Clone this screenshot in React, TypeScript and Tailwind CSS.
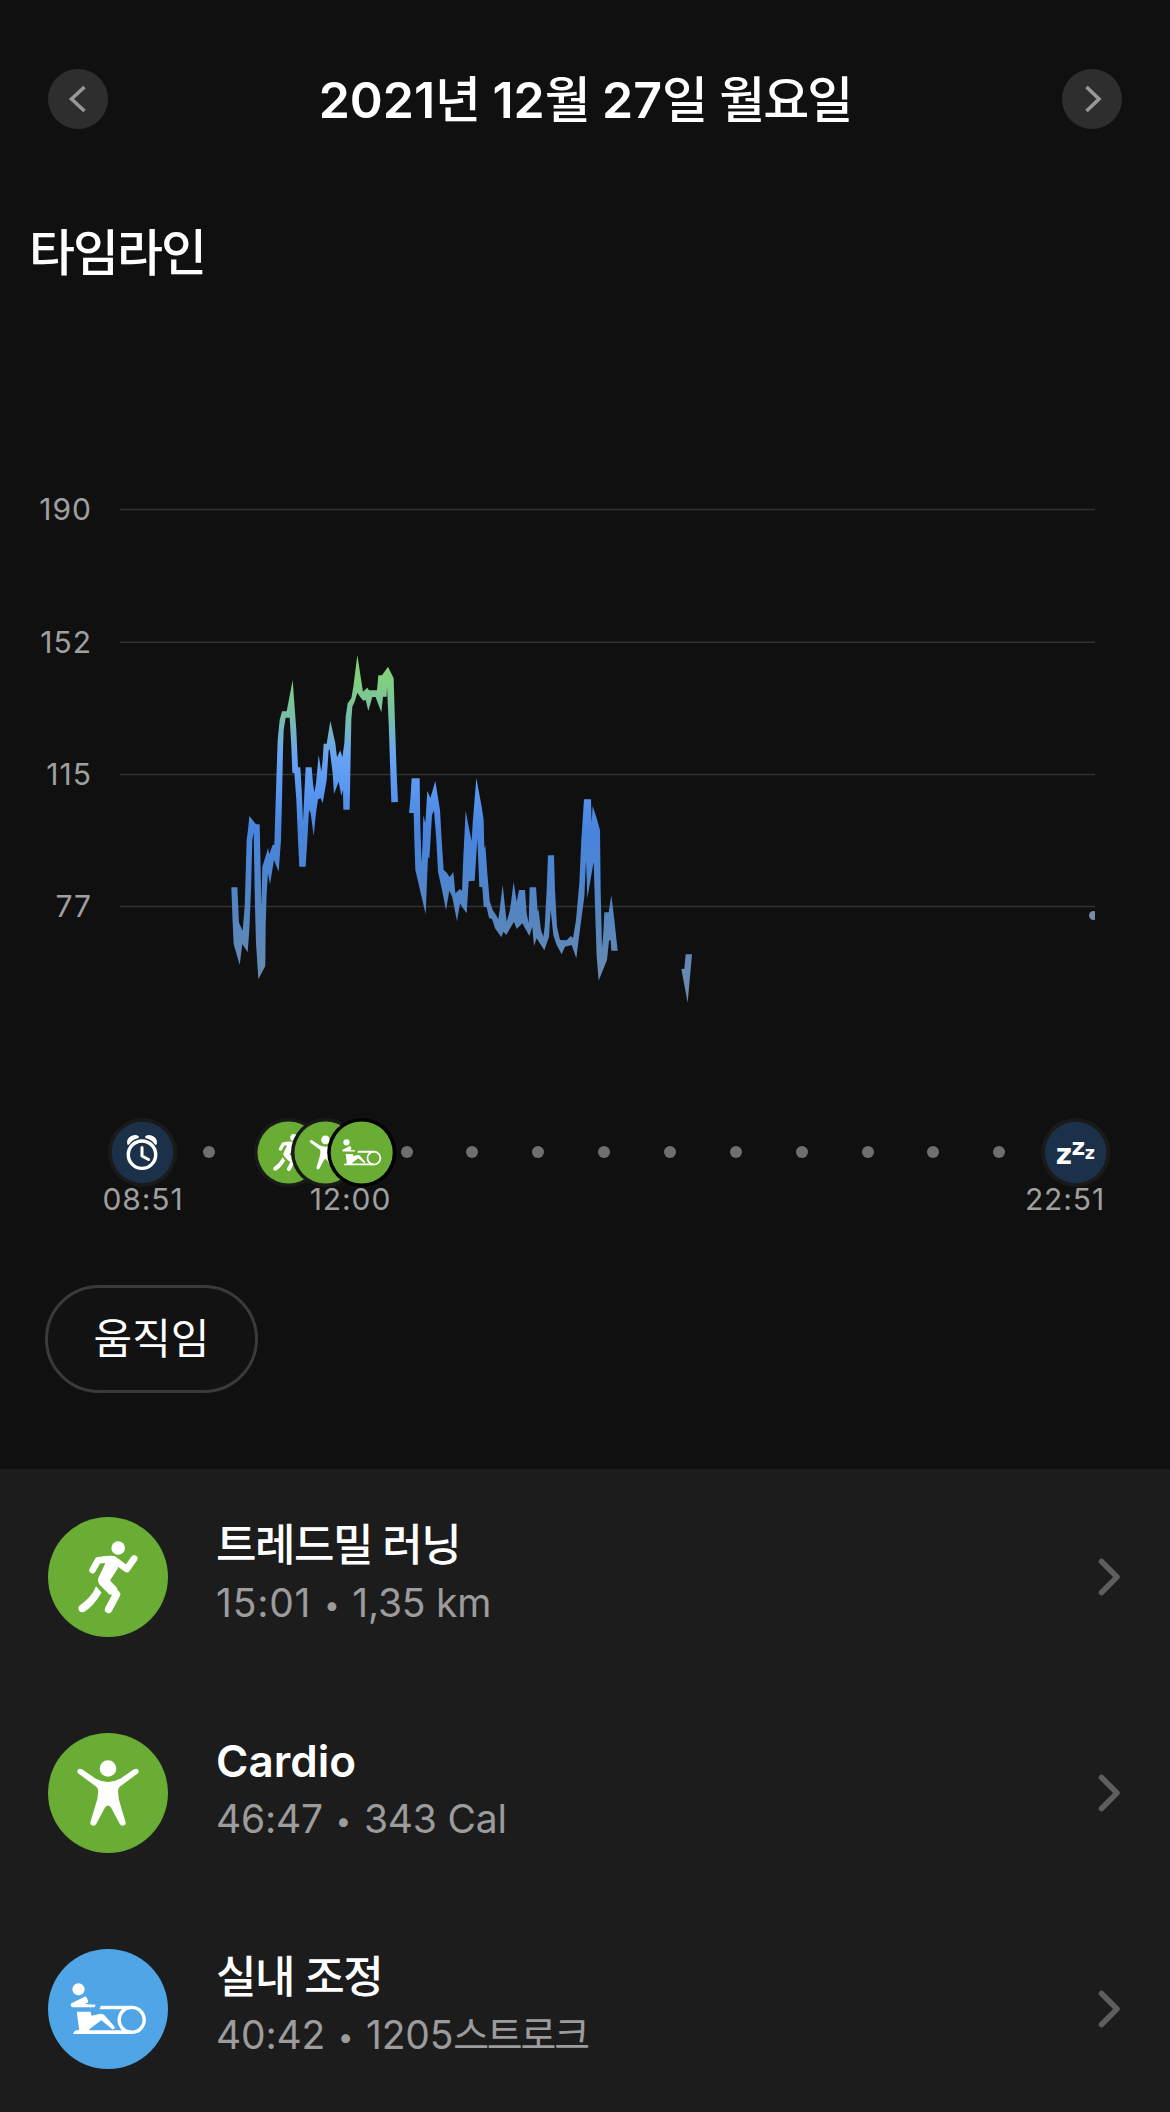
import React from "react";

type IconName = "run" | "cardio" | "row";

type Activity = {
  id: string;
  title: string;
  duration: string;
  value: string;
  unit?: string;
  icon: IconName;
  color: string;
  titleClass: string;
  durationClass: string;
};

const ACTIVITIES: Activity[] = [
  {
    id: "run",
    title: "트레드밀 러닝",
    duration: "15:01",
    value: "1,35 km",
    icon: "run",
    color: "bg-[#6aad35]",
    titleClass: "font-medium tracking-[-1.5px]",
    durationClass: "tracking-[0.8px]",
  },
  {
    id: "cardio",
    title: "Cardio",
    duration: "46:47",
    value: "343 Cal",
    icon: "cardio",
    color: "bg-[#6aad35]",
    titleClass: "font-semibold",
    durationClass: "",
  },
  {
    id: "row",
    title: "실내 조정",
    duration: "40:42",
    value: "1205",
    unit: "스트로크",
    icon: "row",
    color: "bg-[#4fa5e6]",
    titleClass: "font-medium tracking-[-1.5px]",
    durationClass: "",
  },
];

const GRID = [
  { y: 509.5, label: "190" },
  { y: 642.3, label: "152" },
  { y: 774.5, label: "115" },
  { y: 906.5, label: "77" },
];

const DOTS = [209, 407, 472, 538, 604, 670, 736, 802, 868, 933, 999];

const TIMES = [
  { x: 143, label: "08:51" },
  { x: 350.5, label: "12:00" },
  { x: 1065, label: "22:51" },
];

// Outlines of the heart rate trace, three units to a pixel
const TRACES = [
  {
    x: 210,
    y: 640,
    points:
      "64,742 82,742 87,848 98,872 104,800 110,600 114,570 118,528 138,553 149,553 151,640 154,800 157,680 168,645 174,624 178,643 188,614 193,614 199,420 203,300 209,240 216,214 230,214 248,120 259,270 264,382 271,382 275,450 279,545 287,382 305,382 309,430 313,458 318,430 326,345 334,395 338,360 341,311 350,311 361,242 376,310 381,352 391,331 397,352 403,310 407,230 413,190 424,175 430,140 442,45 455,130 459,155 472,143 477,151 501,151 505,106 516,106 534,80 551,115 555,250 560,400 564,486 544,487 541,400 536,250 531,140 530,170 519,170 514,217 500,180 497,171 487,171 475,213 467,180 460,182 450,170 442,158 435,182 427,200 424,240 421,400 419,509 400,509 399,450 394,468 386,425 372,462 368,400 359,328 356,330 350,420 338,490 332,475 324,478 318,520 311,588 302,520 297,510 292,600 287,680 268,680 264,600 259,480 253,400 247,398 244,320 239,233 227,233 221,270 219,330 216,480 213,600 206,695 192,660 180,733 174,700 170,760 167,860 166,978 145,1018 138,910 135,800 132,640 131,577 127,600 123,750 118,870 113,937 97,912 89,975 71,912 68,850",
  },
  {
    x: 400,
    y: 740,
    points:
      "27,219 31,180 35,115 59,115 61,260 65,370 68,300 70,226 76,250 82,152 91,174 106,123 120,210 125,300 131,390 139,397 149,411 160,396 166,460 180,447 186,453 190,350 197,212 205,255 215,303 218,250 229,114 245,200 251,240 253,325 256,316 262,400 269,483 278,510 288,525 295,538 299,510 308,434 316,510 320,545 330,510 341,425 350,485 357,450 375,450 380,520 386,550 389,442 408,442 413,515 415,505 423,570 430,590 434,560 440,450 444,346 462,346 465,450 471,560 480,600 500,601 512,588 519,594 528,540 538,430 544,300 552,178 573,178 575,250 578,198 590,235 600,270 602,450 606,625 610,580 613,517 626,517 634,466 642,530 653,632 634,632 632,600 627,602 621,660 596,722 590,650 585,500 581,365 562,475 558,360 553,470 541,560 529,655 515,615 495,620 485,643 470,615 460,585 452,510 447,590 433,631 410,595 402,618 397,560 388,588 367,550 350,567 342,545 319,585 310,575 304,592 285,565 276,537 267,534 260,502 251,500 247,442 238,441 232,296 224,422 206,424 200,520 186,500 180,490 171,544 157,472 148,452 138,511 126,450 114,395 109,300 102,212 96,225 88,357 84,350 77,523 46,390 43,300 41,219",
  },
  {
    x: 400,
    y: 740,
    points: "857,643 876,643 863,788 844,687 853,686",
  },
];

// All activity glyphs are drawn on a 120 x 120 grid
function Glyph({ name }: { name: IconName }) {
  if (name === "run") {
    return (
      <g fill="white" stroke="white" strokeLinecap="round" strokeLinejoin="round">
        <circle cx="70.2" cy="31" r="6.8" stroke="none" />
        <path d="M54 39.4 Q60 38.4 66.5 38.9 L71.5 45 L69.5 52 L62 63.5 L69.5 71.5 L62 78 L51.5 67.5 Q49 64 50.5 60.5 L57 47 Z" stroke="none" />
        <path d="M66 42.8 L78.8 52 L86.2 41.5" fill="none" strokeWidth="6.6" />
        <path d="M58 42.5 L50 43.4 L44.6 53" fill="none" strokeWidth="6.6" />
        <path d="M56.5 65 L68.6 77.3 L60.6 92.3" fill="none" strokeWidth="7.6" />
        <path d="M48 69.3 L53.6 75.6 Q45 90 36 95 Q31 96.5 30.3 91 Q30.4 89.5 32 88.2 Q42 81 46 73.5 Z" stroke="none" />
      </g>
    );
  }
  if (name === "cardio") {
    return (
      <g fill="white">
        <circle cx="60" cy="35.5" r="8.3" />
        <path d="M34 36.3 L47.5 45.5 Q60 52.5 72.5 45.5 L86 36.3 Q90 34.8 90.7 38 Q90.8 39.5 89 41 L72 53.5 Q70 55 70 58 Q70.2 66 72.5 72 L77.7 89.5 Q78 92 75 92.8 Q72.8 93 71.8 91 L63 74.5 Q60 70.3 57 74.5 L48.2 91 Q47.2 93 45 92.8 Q42 92 42.3 89.5 L47.5 72 Q50 66 50.2 58 Q50.2 55 48 53.5 L31 41 Q29.2 39.5 29.3 38 Q30 34.8 34 36.3 Z" />
      </g>
    );
  }
  return (
    <g fill="white">
      <circle cx="30.5" cy="40.3" r="6.1" />
      <path d="M23 54.5 L37 47.6 Q38.5 47.3 39.5 50.5 Q41 53 39 54 L36.8 55.1 L47.6 55.7 L46.6 58.3 L24 58.3 Q21.8 56.5 23 54.5 Z" />
      <path d="M28.8 62.8 H42.6 L43.6 66.8 L52.5 64.8 Q54.8 64.3 56.5 66.3 L66.6 77.8 Q67.5 80 64.5 80.5 L53.4 71.3 L42.5 79.3 L41 81.3 H83.7 V85 H25.2 Q25.3 82.5 28 81.3 H31.2 Z" />
      <path d="M52.8 56.7 H83.7 V60.3 H51.5 Z" />
      <circle cx="83.7" cy="70.85" r="12.5" fill="none" stroke="white" strokeWidth="3.4" />
    </g>
  );
}

function TimelineActivity({ x, icon, ring }: { x: number; icon: IconName; ring: string }) {
  return (
    <g>
      <circle cx={x} cy="1152.5" r="34.5" fill={ring} />
      <circle cx={x} cy="1152.5" r="31" fill="#6aad35" />
      <g transform={`translate(${x} 1152.5) scale(0.515) translate(-60 -60)`}>
        <Glyph name={icon} />
      </g>
    </g>
  );
}

function Timeline() {
  return (
    <svg
      className="block h-[940px] w-full font-[Inter,'Noto_Sans_CJK_KR',sans-serif]"
      viewBox="0 300 1170 940"
    >
      <defs>
        <linearGradient id="rate" gradientUnits="userSpaceOnUse" x1="0" y1="660" x2="0" y2="1000">
          <stop offset="0" stopColor="#82d36f" />
          <stop offset="0.06" stopColor="#80cf80" />
          <stop offset="0.17" stopColor="#78bdab" />
          <stop offset="0.28" stopColor="#68a4f4" />
          <stop offset="0.38" stopColor="#5997f1" />
          <stop offset="0.5" stopColor="#4884de" />
          <stop offset="0.6" stopColor="#4b85d5" />
          <stop offset="0.75" stopColor="#5585c0" />
          <stop offset="1" stopColor="#6d8bab" />
        </linearGradient>
        <clipPath id="plot">
          <rect x="120" y="490" width="975" height="540" />
        </clipPath>
      </defs>

      {GRID.map((g) => (
        <g key={g.label}>
          <line x1="120" x2="1095" y1={g.y} y2={g.y} stroke="#323232" strokeWidth="1.5" />
          <text x="92" y={g.y + 10.3} textAnchor="end" fontSize="30" letterSpacing="1" fill="#a0a0a0">
            {g.label}
          </text>
        </g>
      ))}

      {/* Heart rate */}
      <g clipPath="url(#plot)" fill="url(#rate)">
        {TRACES.map((t, i) => {
          const points = t.points
            .split(" ")
            .map((p) => {
              const [px, py] = p.split(",").map(Number);
              return `${t.x + px / 3},${t.y + py / 3}`;
            })
            .join(" ");
          return <polygon key={i} points={points} />;
        })}
        <circle cx="1093.5" cy="915.5" r="4.5" fill="#7a8ba4" />
      </g>

      {/* Day track */}
      {DOTS.map((x) => (
        <circle key={x} cx={x} cy="1152" r="6" fill="#6f6f6f" />
      ))}

      <circle cx="142.5" cy="1152.5" r="34.5" fill="#1a1a1a" />
      <circle cx="142.5" cy="1152.5" r="30.7" fill="#1b3149" />
      <g fill="none" stroke="white" strokeLinecap="round" strokeLinejoin="round">
        <circle cx="142" cy="1154.7" r="13.7" strokeWidth="3.4" />
        <path d="M142 1147.5 V1156 L148.5 1159.5" strokeWidth="3" />
      </g>
      <g fill="white">
        <path d="M127.3 1144.3 Q126.2 1139.5 130 1136.8 Q134.5 1133.6 138.5 1136 Q139.3 1137 138.5 1138 Q132.5 1139.5 129.3 1144.3 Q128.3 1145.3 127.3 1144.3 Z" />
        <path d="M156.7 1144.3 Q157.8 1139.5 154 1136.8 Q149.5 1133.6 145.5 1136 Q144.7 1137 145.5 1138 Q151.5 1139.5 154.7 1144.3 Q155.7 1145.3 156.7 1144.3 Z" />
      </g>

      <TimelineActivity x={288.5} icon="run" ring="#1a1a1a" />
      <TimelineActivity x={325.5} icon="cardio" ring="#1a1a1a" />
      <TimelineActivity x={361.7} icon="row" ring="#000000" />

      <circle cx="1075.7" cy="1152.5" r="34.5" fill="#1a1a1a" />
      <circle cx="1075.7" cy="1152.5" r="30.7" fill="#1b3149" />
      <g className="font-['DejaVu_Sans',sans-serif]" fontWeight="700" fill="white">
        <text x="1055.8" y="1163.5" fontSize="28">z</text>
        <text x="1071.4" y="1155" fontSize="23.5">z</text>
        <text x="1084.8" y="1159" fontSize="17.5">z</text>
      </g>

      {TIMES.map((t) => (
        <text key={t.label} x={t.x} y="1210" textAnchor="middle" fontSize="30" letterSpacing="0.9" fill="#a0a0a0">
          {t.label}
        </text>
      ))}
    </svg>
  );
}

function DayButton({ direction }: { direction: "prev" | "next" }) {
  return (
    <button
      className="flex size-[60px] items-center justify-center rounded-full bg-[#2e2e2e]"
      aria-label={direction}
    >
      <svg className="size-[60px]" viewBox="0 0 60 60" fill="none" stroke="#989898" strokeWidth="3.6">
        <path d={direction === "prev" ? "M36.5 18 L23.5 30 L36.5 42" : "M24.5 18 L37 30 L24.5 42"} />
      </svg>
    </button>
  );
}

// Digits are set heavier and wider than the Hangul next to them
function Num({ children }: { children: React.ReactNode }) {
  return <span className="font-semibold tracking-normal">{children}</span>;
}

export default function App() {
  return (
    <div className="h-[2112px] w-full overflow-hidden bg-[#101010] font-[Inter,'Noto_Sans_CJK_KR',sans-serif] text-white">
      <header className="flex items-center justify-between px-12 pt-[69px]">
        <DayButton direction="prev" />
        <h1 className="h-[60px] pt-px text-[50px] leading-[60px] font-medium tracking-[-2px] whitespace-nowrap [word-spacing:2px]">
          <Num>2021</Num>년 <Num>12</Num>월 <Num>27</Num>일 월요일
        </h1>
        <DayButton direction="next" />
      </header>

      <h2 className="mt-[94px] h-[77px] pl-[29px] text-[50px] leading-[60px] font-medium tracking-[-2px]">
        타임라인
      </h2>

      <Timeline />

      <div className="flex h-[229px] items-start pt-[45px] pl-[45px]">
        <button className="h-[108px] w-[213px] rounded-full border-3 border-[#3a3a3a] bg-[#121212] text-[42px] leading-none">
          움직임
        </button>
      </div>

      <main className="flex h-[643px] flex-col gap-24 bg-[#1c1c1c] px-12 pt-12">
        {ACTIVITIES.map((a) => (
          <div key={a.id} className="flex h-[120px] shrink-0 items-center">
            <div className={`size-[120px] shrink-0 rounded-full ${a.color}`}>
              <svg className="size-full" viewBox="0 0 120 120">
                <Glyph name={a.icon} />
              </svg>
            </div>
            <div className="ml-12 flex flex-1 flex-col pb-2 whitespace-nowrap">
              <div className={`h-[60px] text-[44px] leading-[60px] ${a.titleClass}`}>{a.title}</div>
              <div className="h-[56px] text-[39px] leading-[56px] tracking-[-0.2px] text-[#9c9c9c]">
                <span className={a.durationClass}>{a.duration}</span>
                <span className="inline-block w-[41px] text-center align-[2px] text-[28px] leading-none">•</span>
                {a.value}
                {a.unit && <span className="tracking-[-2.2px]">{a.unit}</span>}
              </div>
            </div>
            <svg className="h-10 w-[26px] shrink-0" viewBox="0 0 26 40" fill="none" stroke="#5e5e5e" strokeWidth="5.5" strokeLinecap="round" strokeLinejoin="round">
              <path d="M5.5 4.5 L21 20 L5.5 35.5" />
            </svg>
          </div>
        ))}
      </main>
    </div>
  );
}
